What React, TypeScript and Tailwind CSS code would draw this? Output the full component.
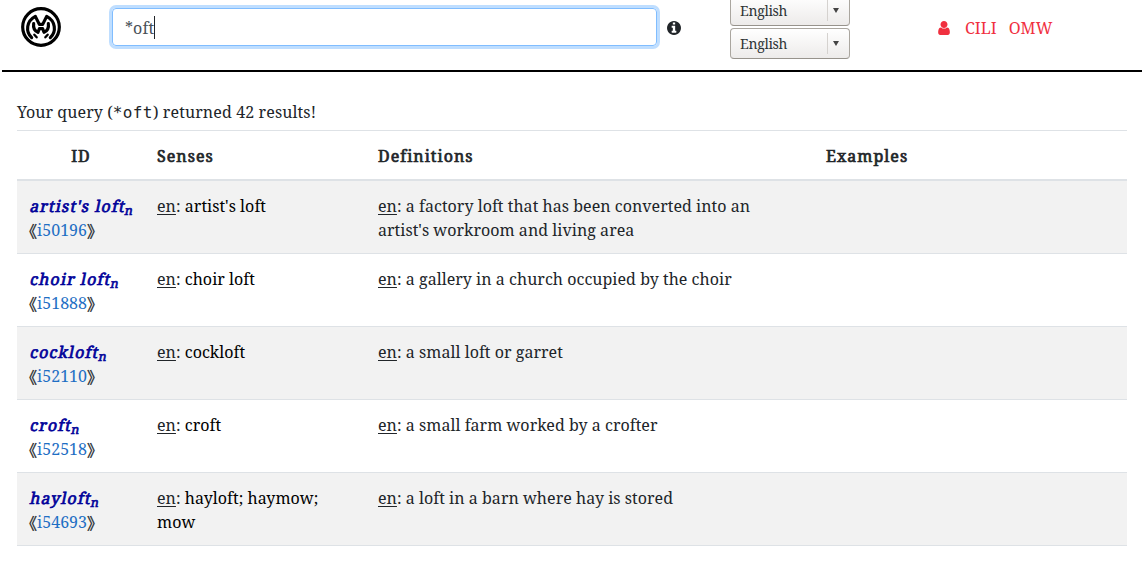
import type { ReactNode } from "react";

type Entry = { word: string; id: string; senses: string; definition: string };

const entries: Entry[] = [
  { word: "artist's loft", id: "i50196", senses: "artist's loft", definition: "a factory loft that has been converted into an artist's workroom and living area" },
  { word: "choir loft", id: "i51888", senses: "choir loft", definition: "a gallery in a church occupied by the choir" },
  { word: "cockloft", id: "i52110", senses: "cockloft", definition: "a small loft or garret" },
  { word: "croft", id: "i52518", senses: "croft", definition: "a small farm worked by a crofter" },
  { word: "hayloft", id: "i54693", senses: "hayloft; haymow; mow", definition: "a loft in a barn where hay is stored" },
];

const columns = "grid grid-cols-[128px_221px_448px_313px]";
const strong = "tracking-[1.03px] [-webkit-text-stroke:0.7px_currentColor]";
const bracket = "font-['Noto_Sans_CJK_SC',sans-serif] leading-none tracking-normal [font-feature-settings:'halt'] [-webkit-text-stroke:0.3px_currentColor]";

function Logo() {
  return (
    <svg viewBox="0 0 120 120" className="size-10 shrink-0" fill="none" stroke="#000" strokeWidth="9.5" strokeLinecap="round" strokeLinejoin="round">
      <circle cx="60" cy="60" r="55" />
      <path d="M32 92C13 74 16 42 43 28L55 52H65L77 28C104 42 107 74 88 92" />
      <path d="M38 50C36 63 40 71 51 76L55 65H65L69 76C80 71 84 63 82 50" />
      <path d="M47 91L40 83M73 91L80 83" strokeWidth="7" />
    </svg>
  );
}

function InfoIcon() {
  return (
    <svg viewBox="0 128 1536 1536" className="size-3.5 shrink-0" fill="#212529">
      <path d="M1024 1376v-160q0-14-9-23t-23-9h-96v-512q0-14-9-23t-23-9h-320q-14 0-23 9t-9 23v160q0 14 9 23t23 9h96v320h-96q-14 0-23 9t-9 23v160q0 14 9 23t23 9h448q14 0 23-9t9-23zm-128-896v-160q0-14-9-23t-23-9h-192q-14 0-23 9t-9 23v160q0 14 9 23t23 9h192q14 0 23-9t9-23zm640 416q0 209-103 385.5t-279.5 279.5-385.5 103-385.5-103-279.5-279.5-103-385.5 103-385.5 279.5-279.5 385.5-103 385.5 103 279.5 279.5 103 385.5z" />
    </svg>
  );
}

function UserIcon() {
  return (
    <svg viewBox="0 128 1280 1536" className="h-3.5 w-3 shrink-0" fill="currentColor">
      <path d="M1280 1399q0 109-62.5 187t-150.5 78h-854q-88 0-150.5-78t-62.5-187q0-85 8.5-160.5t31.5-152 58.5-131 94-89 134.5-34.5q131 128 313 128t313-128q76 0 134.5 34.5t94 89 58.5 131 31.5 152 8.5 160.5zm-256-887q0 159-112.5 271.5t-271.5 112.5-271.5-112.5-112.5-271.5 112.5-271.5 271.5-112.5 271.5 112.5 112.5 271.5z" />
    </svg>
  );
}

function LanguageSelect() {
  return (
    <button className="flex h-[31px] w-[120px] shrink-0 items-center rounded-[4px] border border-[#aaa69f] border-b-[#97938c] bg-linear-to-b from-white to-[#edebea] pl-[9px] text-left text-[14px] leading-5 tracking-[-0.3px] text-[#2e3436]">
      <span className="flex-1">English</span>
      <span className="flex h-[21px] w-[22px] items-center border-l border-[#d5d2cf] pl-[5px]">
        <svg viewBox="0 0 6 5" className="h-[5px] w-1.5" fill="#444"><path d="M0 0h6L3 5z" /></svg>
      </span>
    </button>
  );
}

function Labelled({ children }: { children: ReactNode }) {
  return (
    <>
      <span className="underline decoration-1 underline-offset-2">en</span>: {children}
    </>
  );
}

export default function App() {
  return (
    <div className="h-[563px] overflow-hidden bg-white font-['Noto_Serif','Liberation_Serif',serif] text-base leading-6 tracking-[0.035px] text-[#212529]">
      <header className="mr-[5px] ml-0.5 flex h-[72px] items-start border-b-2 border-black">
        <div className="ml-[19px] pt-[7px]"><Logo /></div>
        <div className="ml-[51px] mt-2 flex h-[38px] w-[545px] items-center rounded-[4px] border border-[#80bdff] pl-3 pt-px text-[#495057] shadow-[0_0_0_3px_#bfdeff]">
          <span className="tracking-[0.1px]">*oft</span>
          <span className="h-[23px] w-px bg-[#212529]" />
        </div>
        <div className="ml-2.5 pt-[21px]"><InfoIcon /></div>
        <div className="ml-[49px] -mt-[5px] flex flex-col gap-0.5">
          <LanguageSelect />
          <LanguageSelect />
        </div>
        <nav className="ml-[88px] mt-4 flex h-6 items-center text-[#f0303f]">
          <UserIcon />
          <span className="ml-[15px]">CILI</span>
          <span className="ml-3">OMW</span>
        </nav>
      </header>
      <main className="pr-5 pl-[17px] pt-7">
        <p className="h-[30px] tracking-[0.08px]">
          Your query (<span className="font-['DejaVu_Sans_Mono',monospace] text-[16px] tracking-[0.4px]">*oft</span>)<span className="tracking-[0.12px]"> returned 42 results!</span>
        </p>
        <div className={`${columns} h-[51px] border-t border-b-2 border-[#dee2e6]`}>
          <div className="px-3 pt-[13px] text-center"><span className={strong}>ID</span></div>
          <div className="px-3 pt-[13px]"><span className={strong}>Senses</span></div>
          <div className="px-3 pt-[13px]"><span className={strong}>Definitions</span></div>
          <div className="px-3 pt-[13px]"><span className={strong}>Examples</span></div>
        </div>
        <div>
          {entries.map((e) => (
            <div key={e.id} className={`${columns} h-[73px] border-b border-[#dee2e6] odd:bg-[#f2f2f2] even:bg-white`}>
              <div className="whitespace-nowrap pt-[13px] pl-3">
                <div className="flex h-6 w-fit -skew-x-[12deg] pl-[1.5px] text-[#000099]">
                  <span className="tracking-[1.13px] [-webkit-text-stroke:0.7px_currentColor]">{e.word}</span>
                  <span className="pt-[5px] text-[12.5px] [-webkit-text-stroke:0.6px_currentColor]">n</span>
                </div>
                <div className="flex h-6 items-center"><span className={bracket}>《</span><span className="text-[#1f6fc4]">{e.id}</span><span className={bracket}>》</span></div>
              </div>
              <div className="px-3 pt-[13px]"><Labelled><span className="text-black">{e.senses}</span></Labelled></div>
              <div className="px-3 pt-[13px]"><Labelled>{e.definition}</Labelled></div>
              <div />
            </div>
          ))}
        </div>
      </main>
    </div>
  );
}
